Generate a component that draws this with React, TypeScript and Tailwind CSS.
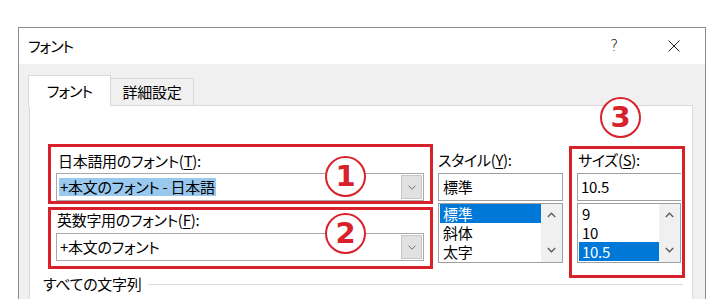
import React from "react";

const RED = "border-[#d9212c]";

function Chevron({ dir = "down" }: { dir?: "down" | "up" }) {
  return (
    <svg width="9" height="6" viewBox="0 0 9 6" className="block">
      {dir === "down" ? (
        <path d="M0.8 1 L4.5 4.8 L8.2 1" fill="none" stroke="#5a5a5a" strokeWidth="1.3" />
      ) : (
        <path d="M0.8 5 L4.5 1.2 L8.2 5" fill="none" stroke="#5a5a5a" strokeWidth="1.3" />
      )}
    </svg>
  );
}

function Combo({ children }: { children: React.ReactNode }) {
  return (
    <div className="h-[28px] border border-[#a8a8a8] bg-white flex">
      <div className="flex-1 flex items-center pl-[2px]">{children}</div>
      <div className="w-[21px] my-px mr-px bg-[#e1e1e1] border border-[#c6c6c6] flex items-center justify-center">
        <svg width="8" height="5" viewBox="0 0 8 5" className="block">
          <path d="M0.5 0.7 L4 4.2 L7.5 0.7" fill="none" stroke="#707070" strokeWidth="1" />
        </svg>
      </div>
    </div>
  );
}

function ListBox({ items, selected }: { items: string[]; selected: number }) {
  return (
    <div className="h-[60px] border border-[#a0a0a0] bg-white flex">
      <div className="flex-1 flex flex-col pl-px">
        {items.map((it, i) => (
          <div
            key={it}
            className={
              "h-[19px] leading-[19px] pl-[3px] " +
              (i === selected ? "bg-[#0078d7] text-white" : "")
            }
          >
            {it}
          </div>
        ))}
      </div>
      <div className="w-[21px] bg-[#f0f0f0] flex flex-col items-center justify-between pt-[8px] pb-[9px]">
        <Chevron dir="up" />
        <Chevron dir="down" />
      </div>
    </div>
  );
}

function Circled({ n, className }: { n: string; className: string }) {
  return (
    <div
      className={
        "absolute w-[41px] h-[41px] rounded-full border-2 border-[#d9212c] bg-white flex items-center justify-center text-[#d9212c] font-['DejaVu_Sans',sans-serif] font-bold text-[29px] leading-none tracking-normal " +
        className
      }
    >
      <span className="-mt-[1px]">{n}</span>
    </div>
  );
}

export default function App() {
  return (
    <div className="relative w-[726px] h-[299px] overflow-hidden bg-white pt-[27px] pl-[18px] font-['Noto_Sans_CJK_JP',sans-serif] [font-feature-settings:'palt'] text-[15px] tracking-[-0.3px] leading-[20px] text-black">
      <div className="w-[688px] h-[272px] border border-b-0 border-[#8c8c8c] bg-[#f0f0f0] flex flex-col">
        {/* title bar */}
        <div className="h-[36px] shrink-0 bg-white flex items-center pl-[9px]">
          <span className="tracking-[-1px]">フォント</span>
          <span className="ml-auto mr-[50px] text-[15px] font-['DejaVu_Sans',sans-serif] font-light">?</span>
          <svg width="12" height="12" viewBox="0 0 12 12" className="mr-[25px] block">
            <path d="M0.5 0.5 L11.5 11.5 M11.5 0.5 L0.5 11.5" stroke="#222" strokeWidth="1" />
          </svg>
        </div>

        {/* body */}
        <div className="flex-1 flex flex-col pl-[10px] pr-[12px] pt-[11px]">
          <div className="flex items-end h-[30px] -ml-px relative z-10">
            <div className="w-[83px] h-[31px] -mb-px bg-white border border-b-0 border-[#d9d9d9] flex items-center justify-center tracking-[-1px]">
              フォント
            </div>
            <div className="w-[83px] h-[27px] border border-l-0 border-b-0 border-[#d9d9d9] flex items-center justify-center">
              詳細設定
            </div>
          </div>

          <div className="flex-1 bg-white border border-b-0 border-[#d9d9d9] flex flex-col pl-[18px] pt-[38px]">
            <div className="flex items-start">
              {/* left column */}
              <div className="w-[385px] flex flex-col gap-[3px]">
                <div className={"h-[60px] border-[3px] " + RED + " pl-[5px] pr-[6px] pt-[4px]"}>
                  <div className="h-[20px] pl-[2px]">
                    日本語用のフォント(<span className="underline underline-offset-2">T</span>):
                  </div>
                  <div className="mt-[2px]">
                    <Combo>
                      <span className="bg-[#99c9ef] leading-[18px] px-[1px]">+本文のフォント - 日本語</span>
                    </Combo>
                  </div>
                </div>
                <div className={"h-[62px] border-[3px] " + RED + " pl-[5px] pr-[6px]"}>
                  <div className="h-[20px] pl-[1px]">
                    英数字用のフォント(<span className="underline underline-offset-2">F</span>):
                  </div>
                  <div className="mt-[3px]">
                    <Combo>
                      <span className="px-[1px]">+本文のフォント</span>
                    </Combo>
                  </div>
                </div>
              </div>

              {/* style column */}
              <div className="w-[125px] ml-[5px] mt-[6px] flex flex-col">
                <div className="h-[20px]">
                  スタイル(<span className="underline underline-offset-2">Y</span>):
                </div>
                <div className="mt-[3px] h-[28px] border border-[#a0a0a0] bg-white flex items-center pl-[4px]">
                  標準
                </div>
                <div className="mt-[2px]">
                  <ListBox items={["標準", "斜体", "太字"]} selected={0} />
                </div>
              </div>

              {/* size column */}
              <div className={"w-[116px] ml-[6px] mt-[2px] h-[132px] border-[3px] " + RED + " pl-[5px] pr-[1px] pt-[1px]"}>
                <div className="h-[20px] pl-[1px]">
                  サイズ(<span className="underline underline-offset-2">S</span>):
                </div>
                <div className="mt-[3px] h-[28px] border border-[#a0a0a0] border-r-0 bg-white flex items-center pl-[3px]">
                  10.5
                </div>
                <div className="mt-[2px]">
                  <ListBox items={["9", "10", "10.5"]} selected={2} />
                </div>
              </div>
            </div>

            <div className="-mt-[4px] -ml-[5px] h-[20px] flex items-center">
              <span>すべての文字列</span>
              <div className="flex-1 h-px bg-[#dcdcdc] ml-[7px] mr-[9px]" />
            </div>
          </div>
        </div>
      </div>

      <Circled n="1" className="left-[325px] top-[156px]" />
      <Circled n="2" className="left-[325px] top-[213px]" />
      <Circled n="3" className="left-[600px] top-[97px]" />
    </div>
  );
}
